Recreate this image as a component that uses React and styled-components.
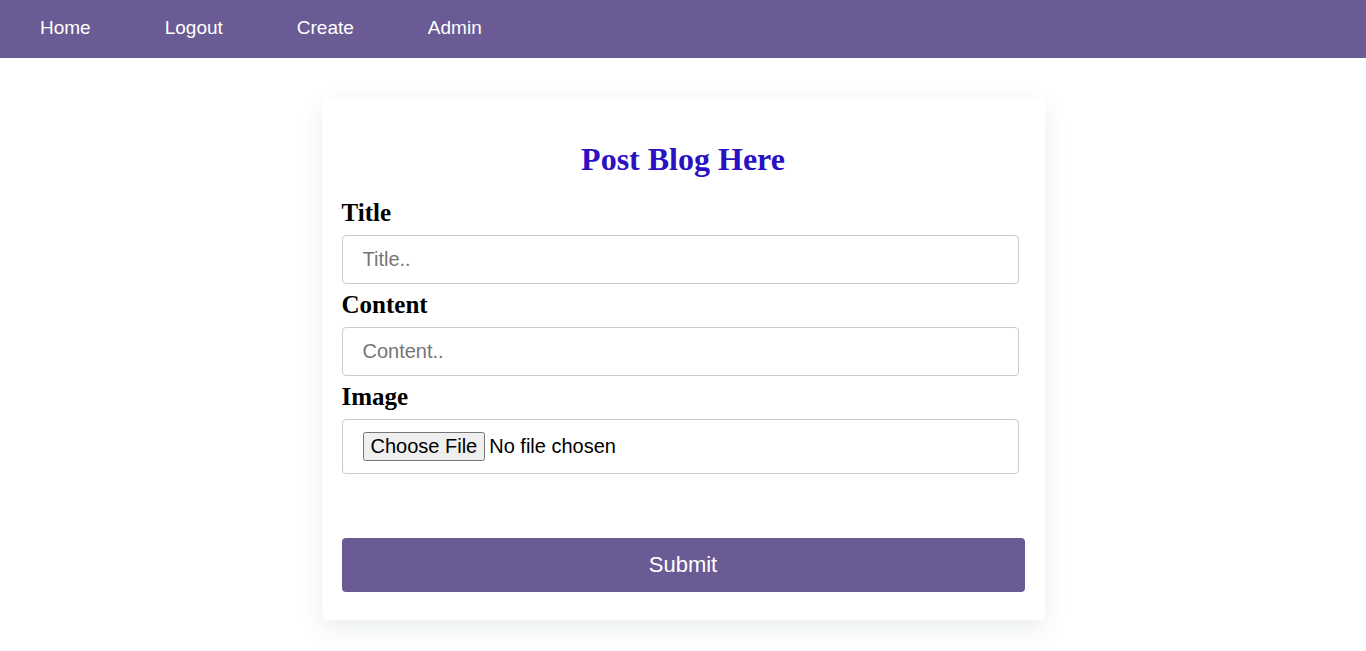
import React from "react";
import styled, { createGlobalStyle } from "styled-components";

const GlobalStyle = createGlobalStyle`
  body {
    margin: 0;
    background: #fff;
    font-family: "Liberation Serif", "Times New Roman", serif;
  }
`;

const NavBar = styled.nav`
  display: flex;
  gap: 74px;
  padding: 18px 40px 20px;
  background: #6b5b95;
`;

const NavLink = styled.a`
  color: #fff;
  font: 19px/20px "Liberation Sans", Arial, sans-serif;
  text-decoration: none;
`;

const Card = styled.main`
  width: 50%;
  margin: 40px auto 31px;
  padding: 42px 20px 28px;
  border-radius: 5px;
  background: #fff;
  box-shadow: 0 8px 24px rgba(14, 52, 54, 0.09);
`;

const Heading = styled.h1`
  margin: 0 0 20px;
  color: #2a12c4;
  font-size: 32px;
  line-height: 38px;
  text-align: center;
`;

const Form = styled.form`
  display: flex;
  flex-direction: column;
`;

const Label = styled.label`
  margin-bottom: 7px;
  font-size: 25px;
  font-weight: bold;
  line-height: 30px;
`;

const Field = styled.input`
  box-sizing: border-box;
  margin: 0 6px 6px 0;
  padding: 12px 20px;
  border: 1px solid #ccc;
  border-radius: 4px;
  background: #fff;
  color: #000;
  font: 20px/23px "Liberation Sans", Arial, sans-serif;

  &::file-selector-button {
    font: inherit;
  }
`;

const SubmitButton = styled.button`
  margin-top: 58px;
  padding: 14px 20px;
  border: 0;
  border-radius: 4px;
  background: #6b5b95;
  color: #fff;
  font: 22px/26px "Liberation Sans", Arial, sans-serif;
  cursor: pointer;
`;

const links = ["Home", "Logout", "Create", "Admin"];

export default function App() {
  return (
    <>
      <GlobalStyle />
      <NavBar>
        {links.map((name) => (
          <NavLink key={name} href={`#${name.toLowerCase()}`}>{name}</NavLink>
        ))}
      </NavBar>
      <Card>
        <Heading>Post Blog Here</Heading>
        <Form onSubmit={(event) => event.preventDefault()}>
          <Label htmlFor="title">Title</Label>
          <Field id="title" type="text" placeholder="Title.." />
          <Label htmlFor="content">Content</Label>
          <Field id="content" type="text" placeholder="Content.." />
          <Label htmlFor="image">Image</Label>
          <Field id="image" type="file" />
          <SubmitButton type="submit">Submit</SubmitButton>
        </Form>
      </Card>
    </>
  );
}
